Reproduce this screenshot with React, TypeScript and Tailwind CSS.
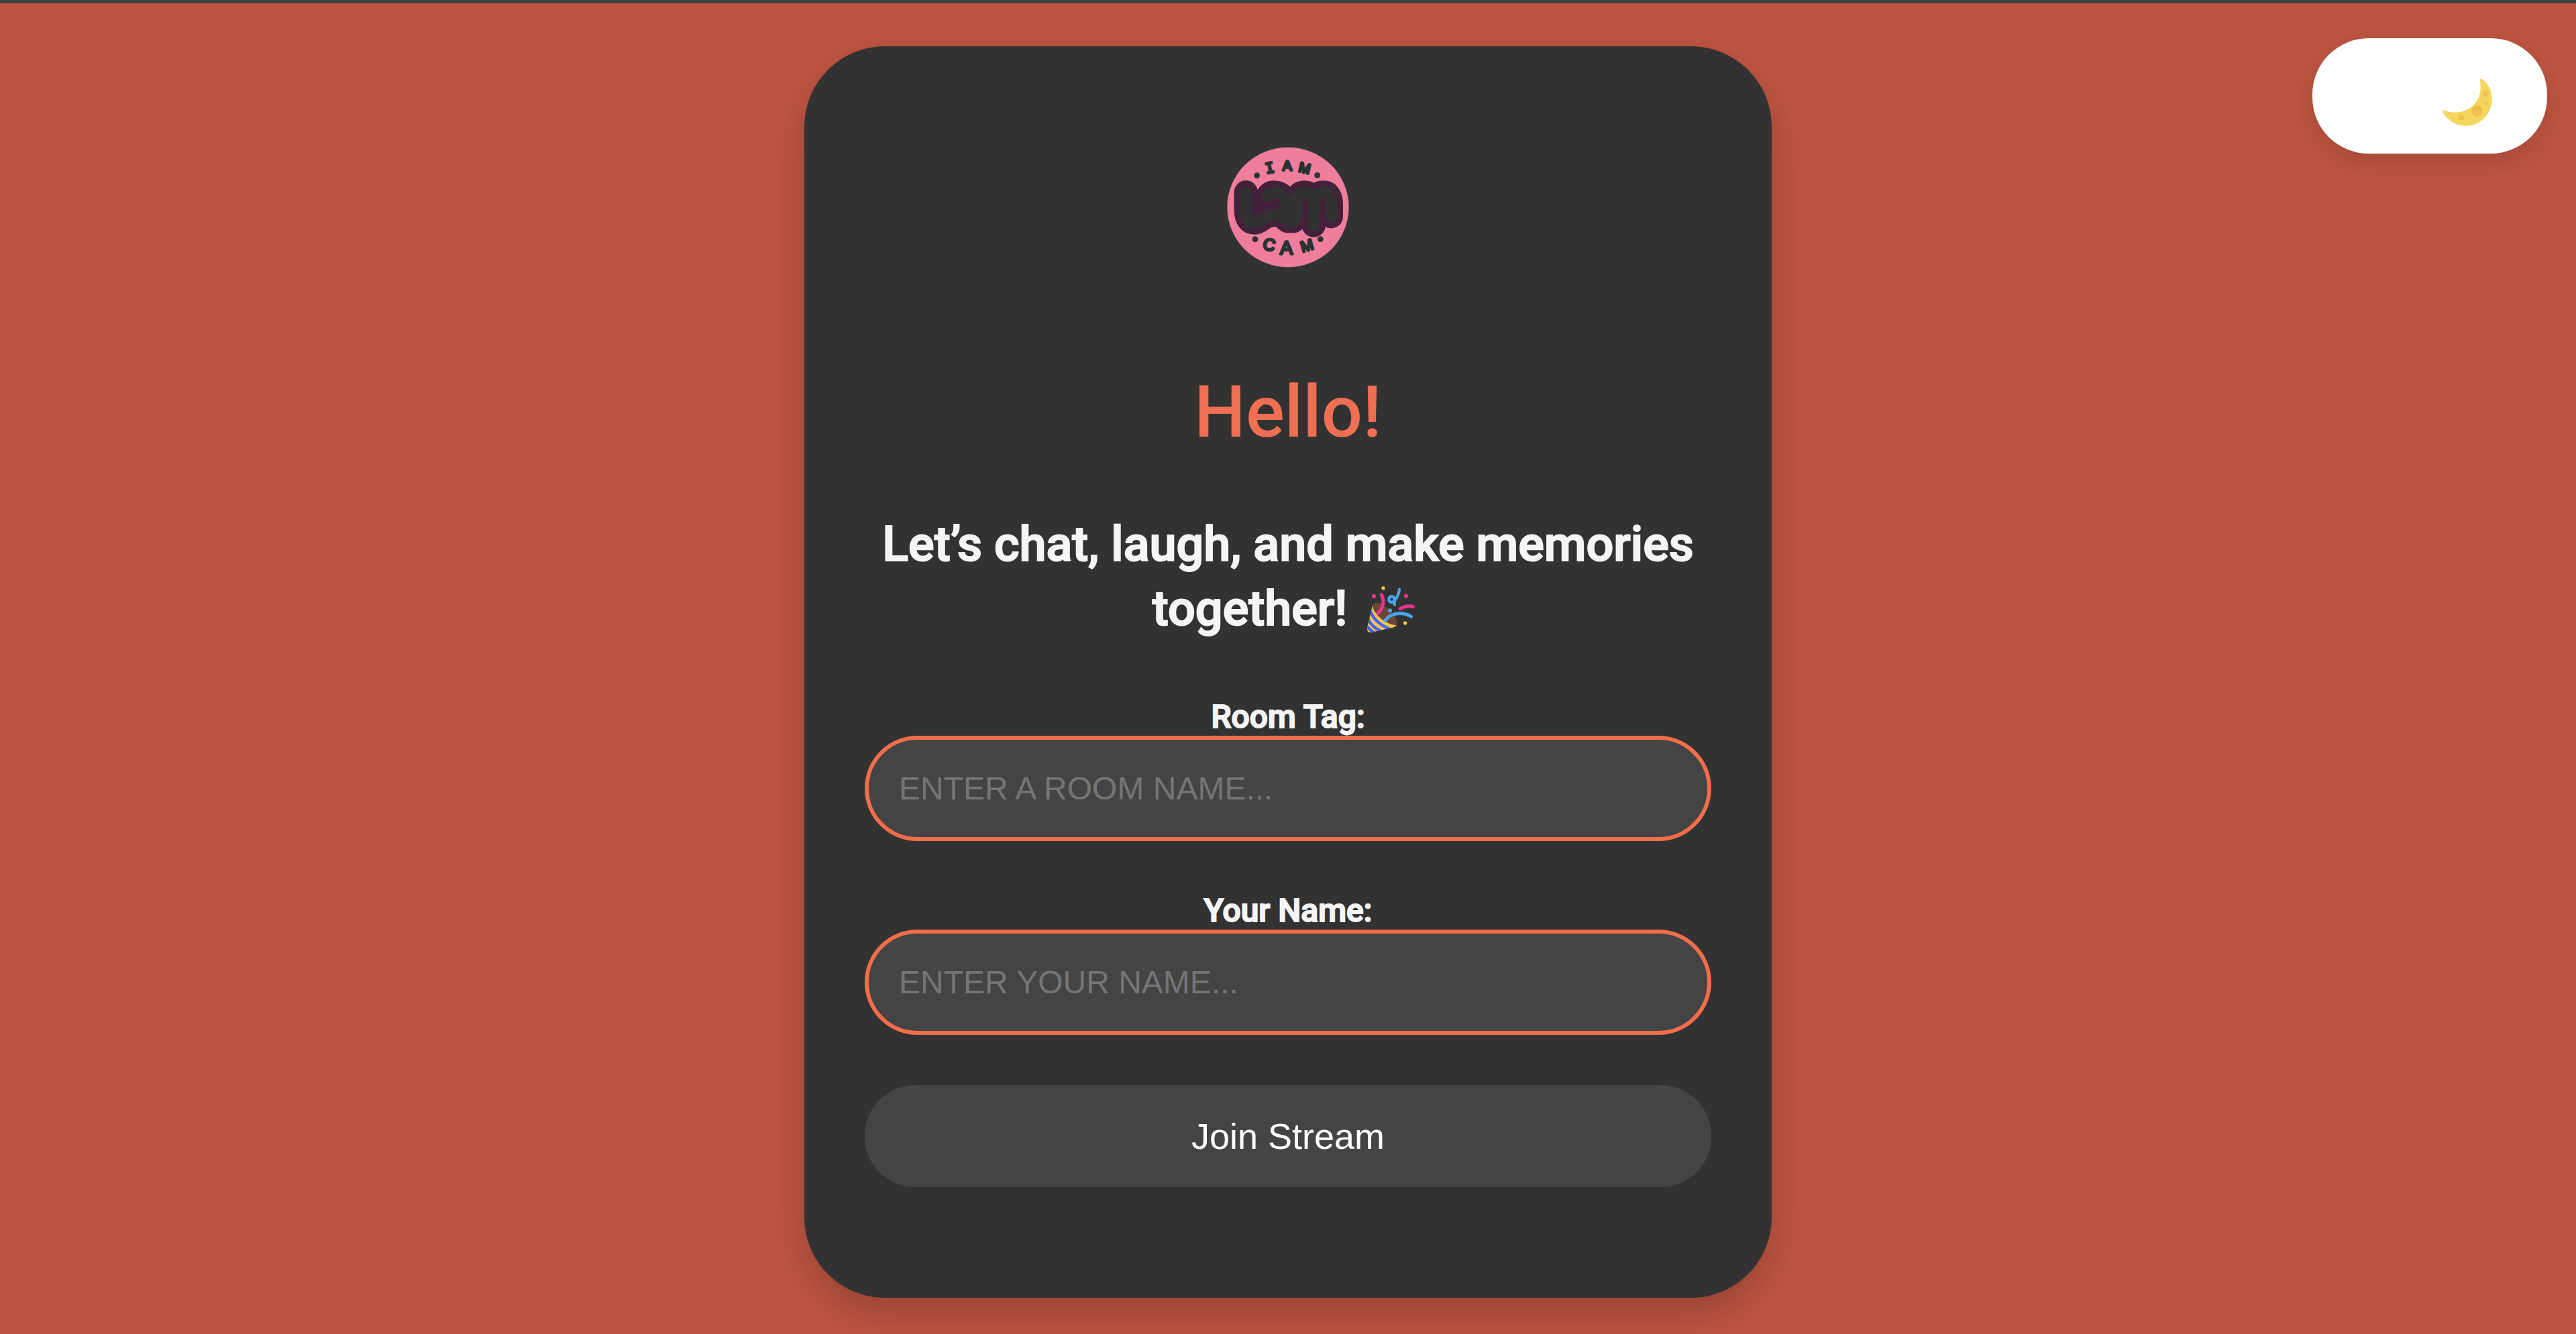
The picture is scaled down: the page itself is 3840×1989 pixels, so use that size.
import { useState } from "react";
import type { InputHTMLAttributes } from "react";

const wordmark =
  "M175 290V374Q177 426 214 426C242 426 258 388 304 392H352 M272 307Q282 291 300 291C334 291 352 315 352 347V390 M400 390V340Q402 291 436 291C464 291 478 314 478 340V438 M478 336Q484 291 522 291C547 291 556 316 556 345V398";
const wordmarkJoin = "M352 348H397V405Q395 419 384 419H362Q352 415 344 400Z";

function Logo() {
  return (
    <svg viewBox="87 81 552 552" className="size-[184px]" role="img" aria-label="I am Lam Cam">
      <ellipse cx="363" cy="357" rx="273" ry="269" fill="#ee7e9b" stroke="#23383a" strokeWidth="2" />
      <g fill="#43213a" stroke="#43213a" strokeWidth="106" strokeLinecap="round" strokeLinejoin="round">
        <path d={wordmark} fill="none" />
        <path d={wordmarkJoin} />
        <path d="M200 300H320V400H200Z" stroke="none" />
      </g>
      <g fill="none" stroke="#323232" strokeWidth="52" strokeLinecap="round" strokeLinejoin="round">
        <path d={wordmark} />
        <path d={wordmarkJoin} fill="#323232" />
      </g>
      <g fill="#2b3233">
        <circle cx="224" cy="215" r="13" />
        <circle cx="494" cy="214" r="13" />
        <circle cx="216" cy="500" r="13" />
        <circle cx="508" cy="500" r="13" />
      </g>
      <g
        fill="#2b3233"
        stroke="#2b3233"
        strokeWidth="10"
        strokeLinejoin="round"
        textAnchor="middle"
        className="font-['Liberation_Sans']"
      >
        <text transform="translate(286 203) rotate(-12)" fontSize="64" className="font-['DejaVu_Sans_Mono']">I</text>
        <text transform="translate(360 191)" fontSize="62">A</text>
        <text transform="translate(432 203) rotate(14)" fontSize="62">M</text>
        <text transform="translate(274 549) rotate(12)" fontSize="74">C</text>
        <text transform="translate(356 567)" fontSize="84">A</text>
        <text transform="translate(454 551) rotate(-16)" fontSize="68">M</text>
      </g>
    </svg>
  );
}

function PartyPopper() {
  return (
    <svg viewBox="144 90 288 237" className="inline-block h-[79px] w-24 align-text-bottom" role="img" aria-label="Party popper">
      <defs>
        <clipPath id="cone">
          <path d="M204 184C206 222 262 272 312 274C304 284 290 285 276 288L200 305C186 308 178 300 180 286Z" />
        </clipPath>
      </defs>
      <path d="M205 190C208 170 226 166 250 182C286 204 318 246 314 264C311 284 284 282 254 262C226 244 203 212 205 190Z" fill="#6b4635" />
      <g clipPath="url(#cone)">
        <rect x="170" y="170" width="160" height="150" fill="#f3c553" />
        <g fill="none" stroke="#4560f5" strokeWidth="13">
          <path d="M194 208C204 242 236 272 284 292" />
          <path d="M182 238C192 268 210 286 250 304" />
          <path d="M172 268C180 284 192 294 214 310" />
        </g>
      </g>
      <g fill="none" strokeWidth="15" strokeLinecap="round">
        <path d="M244 137C258 164 254 196 228 220" stroke="#ea3391" />
        <path d="M328 200C346 188 366 186 385 190" stroke="#ea3391" />
        <path d="M261 252C290 214 340 214 377 235" stroke="#4aa3ea" />
        <path d="M324 114C321 134 314 152 302 164C288 178 274 168 278 153C283 141 297 142 301 153C304 162 302 172 302 182" stroke="#4aa3ea" strokeWidth="13" />
      </g>
      <circle cx="282" cy="208" r="9" fill="#4aa3ea" />
      <circle cx="210" cy="144" r="9" fill="#ea3391" />
      <circle cx="354" cy="143" r="9" fill="#ea3391" />
      <circle cx="252" cy="108" r="8" fill="#f3c553" />
      <circle cx="350" cy="264" r="8" fill="#f3c553" />
    </svg>
  );
}

function Moon() {
  return (
    <svg viewBox="720 346 228 219" className="h-[73px] w-[76px]" aria-hidden="true">
      <path
        d="M901 352C929 374 944 405 944 442C944 510 890 561 827 561C783 561 746 537 724 500C721 494 726 490 732 492C800 514 845 490 874 454C893 427 896 396 891 358C890 351 896 348 901 352Z"
        fill="#f6d55c"
      />
      <g fill="#efc050">
        <circle cx="915" cy="415" r="13" />
        <circle cx="919" cy="460" r="8" />
        <circle cx="877" cy="494" r="25" />
        <circle cx="807" cy="523" r="13" />
      </g>
    </svg>
  );
}

function Field({ id, label, ...rest }: { id: string; label: string } & InputHTMLAttributes<HTMLInputElement>) {
  return (
    <div className="flex flex-col">
      <label htmlFor={id} className="text-center text-[48px] leading-[57px] font-medium text-[#f5f5f5] [-webkit-text-stroke:2px_#f5f5f5]">
        {label}
      </label>
      <input
        id={id}
        type="text"
        className="w-full rounded-full border-6 border-[#f26d4c] bg-[#444] px-[45px] py-[45px] font-['Liberation_Sans',Arial,sans-serif] text-[48px] leading-[55px] text-white uppercase outline-none placeholder:text-[#757575]"
        {...rest}
      />
    </div>
  );
}

export default function App() {
  const [room, setRoom] = useState("");
  const [name, setName] = useState("");

  return (
    <div className="relative flex min-h-screen flex-col border-t-5 border-[#424242] bg-[#be5541] font-['Roboto',sans-serif]">
      <button
        type="button"
        aria-label="Toggle dark mode"
        className="absolute top-[52px] right-[43px] flex h-[172px] w-[350px] items-center justify-end rounded-[84px] bg-white pt-[18px] pr-[81px] shadow-[0_12px_45px_rgba(0,0,0,0.15)]"
      >
        <Moon />
      </button>

      <main className="flex flex-1 justify-center px-6 pt-16 pb-[54px]">
        <section className="flex w-full max-w-[1442px] flex-col items-center rounded-[120px] bg-[#323232] px-[90px] pt-[148px] pb-[164px] shadow-[0_24px_60px_rgba(0,0,0,0.2)]">
          <Logo />
          <h1 className="mt-[149px] text-[108px] leading-[128px] font-medium text-[#ef6f52]">Hello!</h1>
          <h2 className="mt-[86px] text-center text-[72px] leading-[96px] font-medium text-[#f5f5f5] [-webkit-text-stroke:2px_#f5f5f5]">
            Let’s chat, laugh, and make memories together! <PartyPopper />
          </h2>
          <form className="mt-[84px] flex w-full flex-col gap-[75px]" onSubmit={(e) => e.preventDefault()}>
            <Field
              id="room"
              label="Room Tag:"
              placeholder="Enter a room name..."
              value={room}
              onChange={(e) => setRoom(e.target.value)}
            />
            <Field
              id="name"
              label="Your Name:"
              placeholder="Enter your name..."
              value={name}
              onChange={(e) => setName(e.target.value)}
            />
            <button
              type="submit"
              className="w-full rounded-[75px] bg-[#444] py-12 font-['Liberation_Sans',Arial,sans-serif] text-[54px] leading-[56px] text-white"
            >
              Join Stream
            </button>
          </form>
        </section>
      </main>
    </div>
  );
}
